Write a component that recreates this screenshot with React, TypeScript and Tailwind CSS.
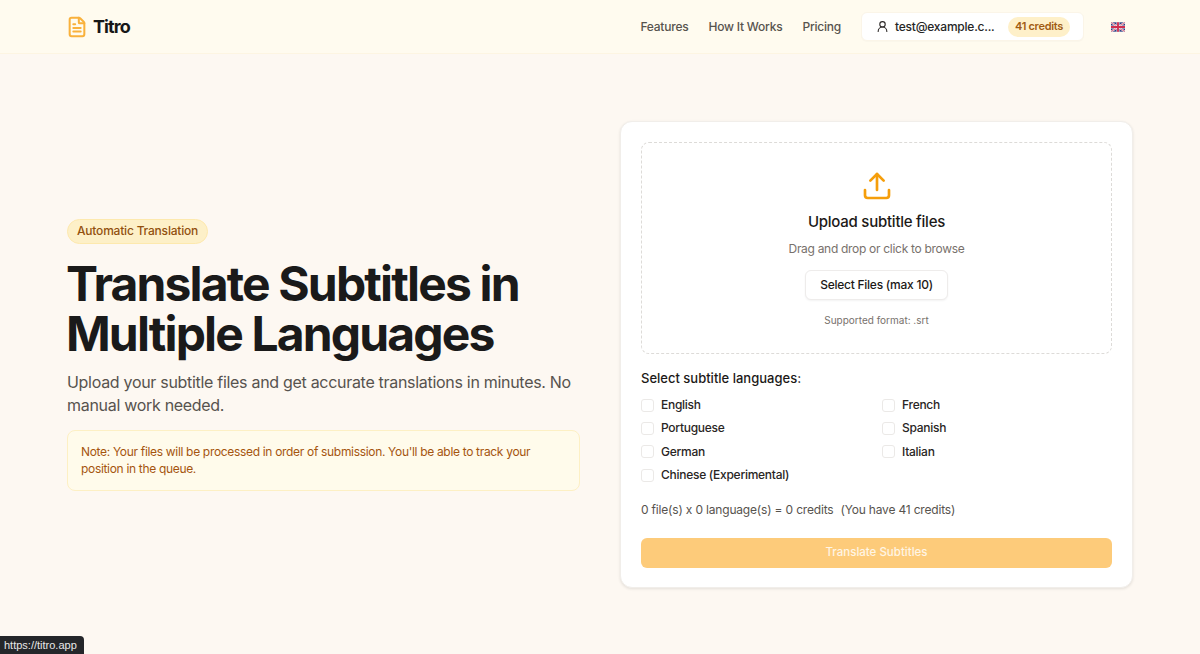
import { FileText, Upload, UserRound } from "lucide-react"

const languages = ["English", "French", "Portuguese", "Spanish", "German", "Italian", "Chinese (Experimental)"]

function UkFlag() {
  return (
    <svg width="14" height="10" viewBox="0 0 60 40" className="rounded-[1px]">
      <rect width="60" height="40" fill="#2b3f86" />
      <path d="M0 0L60 40M60 0L0 40" stroke="#f3e9ec" strokeWidth="8" />
      <path d="M0 0L60 40M60 0L0 40" stroke="#cf2f4f" strokeWidth="3" />
      <path d="M30 0V40M0 20H60" stroke="#f3e9ec" strokeWidth="13" />
      <path d="M30 0V40M0 20H60" stroke="#cf2f4f" strokeWidth="8" />
    </svg>
  )
}

function Header() {
  return (
    <header className="h-[54px] bg-[#fffbef] border-b border-[#fdf5e2] px-[67px] flex items-center justify-between">
      <div className="flex items-center gap-[5px]">
        <FileText className="w-[22px] h-[22px] -ml-px text-[#f9b13c]" strokeWidth={2.2} />
        <span className="text-[18px] font-bold text-[#171717] tracking-[-0.9px]">Titro</span>
      </div>
      <nav className="flex items-center text-xs tracking-[-0.22px] font-medium text-[#57534e]">
        <a className="mr-5">Features</a>
        <a className="mr-5">How It Works</a>
        <a className="mr-5">Pricing</a>
        <div className="w-[223px] h-[29px] bg-white border border-[#fbf5e8] rounded-md flex items-center pl-[14px] shadow-[0_1px_1px_rgba(0,0,0,0.02)]">
          <UserRound className="w-[13px] h-[13px] text-[#292524]" strokeWidth={2} />
          <span className="ml-[6px] text-[#262626] w-[113px]">test@example.c...</span>
          <span className="h-[20px] px-[7px] rounded-full bg-[#fef0c9] text-[#a15c12] text-[11px] tracking-[-0.3px] font-semibold flex items-center">
            41 credits
          </span>
        </div>
        <div className="ml-[27px] mr-[8px]">
          <UkFlag />
        </div>
      </nav>
    </header>
  )
}

function Hero() {
  return (
    <section className="w-[513px]">
      <span className="inline-flex items-center h-[25px] px-[9px] rounded-full bg-[#fdf0c8] border border-[#fde9ae] text-[#92500f] text-xs tracking-[-0.2px] font-medium">
        Automatic Translation
      </span>
      <h1 className="mt-[15px] -ml-px text-[48px] leading-[50px] font-bold tracking-[-1.85px] text-[#1a1a1a]">
        Translate Subtitles in Multiple Languages
      </h1>
      <p className="mt-3 text-base tracking-[-0.3px] leading-[23px] text-[#57534e]">
        Upload your subtitle files and get accurate translations in minutes. No manual work needed.
      </p>
      <div className="mt-[13px] h-[61px] px-[13px] flex items-center bg-[#fffbeb] border border-[#fdf0c4] rounded-lg text-xs tracking-[-0.32px] leading-[17px] text-[#a5550f]">
        <p>Note: Your files will be processed in order of submission. You'll be able to track your position in the queue.</p>
      </div>
    </section>
  )
}

function UploadCard() {
  return (
    <section className="w-[513px] h-[467px] bg-white border border-[#f1eeea] rounded-xl p-5 shadow-[0_1px_3px_rgba(0,0,0,0.1)]">
      <div className="h-[212px] border border-dashed border-[#dddbd8] rounded-lg flex flex-col items-center pt-[27px]">
        <Upload className="w-[32px] h-[32px] text-[#f59e0b]" strokeWidth={2} />
        <h3 className="mt-[8px] text-[15px] tracking-[-0.25px] leading-[24px] font-medium text-[#1c1917]">Upload subtitle files</h3>
        <p className="mt-[6px] text-xs tracking-[-0.3px] leading-[18px] text-[#78716c]">Drag and drop or click to browse</p>
        <button className="mt-[12px] h-[30px] px-[14px] bg-white border border-[#eeeceb] rounded-md text-xs tracking-[-0.25px] font-medium text-[#1c1917] shadow-[0_1px_2px_rgba(0,0,0,0.05)]">
          Select Files (max 10)
        </button>
        <p className="mt-[13px] text-[10px] leading-[15px] text-[#78716c]">Supported format: .srt</p>
      </div>
      <h4 className="mt-[14px] text-[13px] leading-[20px] font-medium text-[#1c1917]">Select subtitle languages:</h4>
      <div className="mt-[6px] grid grid-cols-2 gap-x-[11px]">
        {languages.map((lang) => (
          <label key={lang} className="h-[23.3px] flex items-center gap-[7px] text-xs tracking-[-0.27px] font-medium text-[#292524]">
            <span className="w-[13px] h-[13px] bg-white border border-[#ebe9e7] rounded-[3px]" />
            {lang}
          </label>
        ))}
      </div>
      <p className="mt-[14px] text-xs tracking-[-0.18px] leading-[18px] text-[#57534e]">
        0 file(s) x 0 language(s) = 0 credits<span className="ml-[7px]">(You have 41 credits)</span>
      </p>
      <button className="mt-[19px] w-full h-[30px] rounded-md bg-[#fdcb7a] text-white/80 text-[11.5px] font-medium">
        Translate Subtitles
      </button>
    </section>
  )
}

export default function App() {
  return (
    <div className="relative h-[654px] overflow-hidden bg-[#fdf8f2] font-['Inter',sans-serif]">
      <Header />
      <main className="h-[600px] px-[67px] flex items-center justify-between">
        <Hero />
        <UploadCard />
      </main>
      <div className="absolute left-0 bottom-0 h-[18px] w-[84px] pl-1 bg-[#24262a] rounded-tr-[4px] flex items-center text-[11px] text-[#e8e8e8] font-['Liberation_Sans',sans-serif]">
        https://titro.app
      </div>
    </div>
  )
}
